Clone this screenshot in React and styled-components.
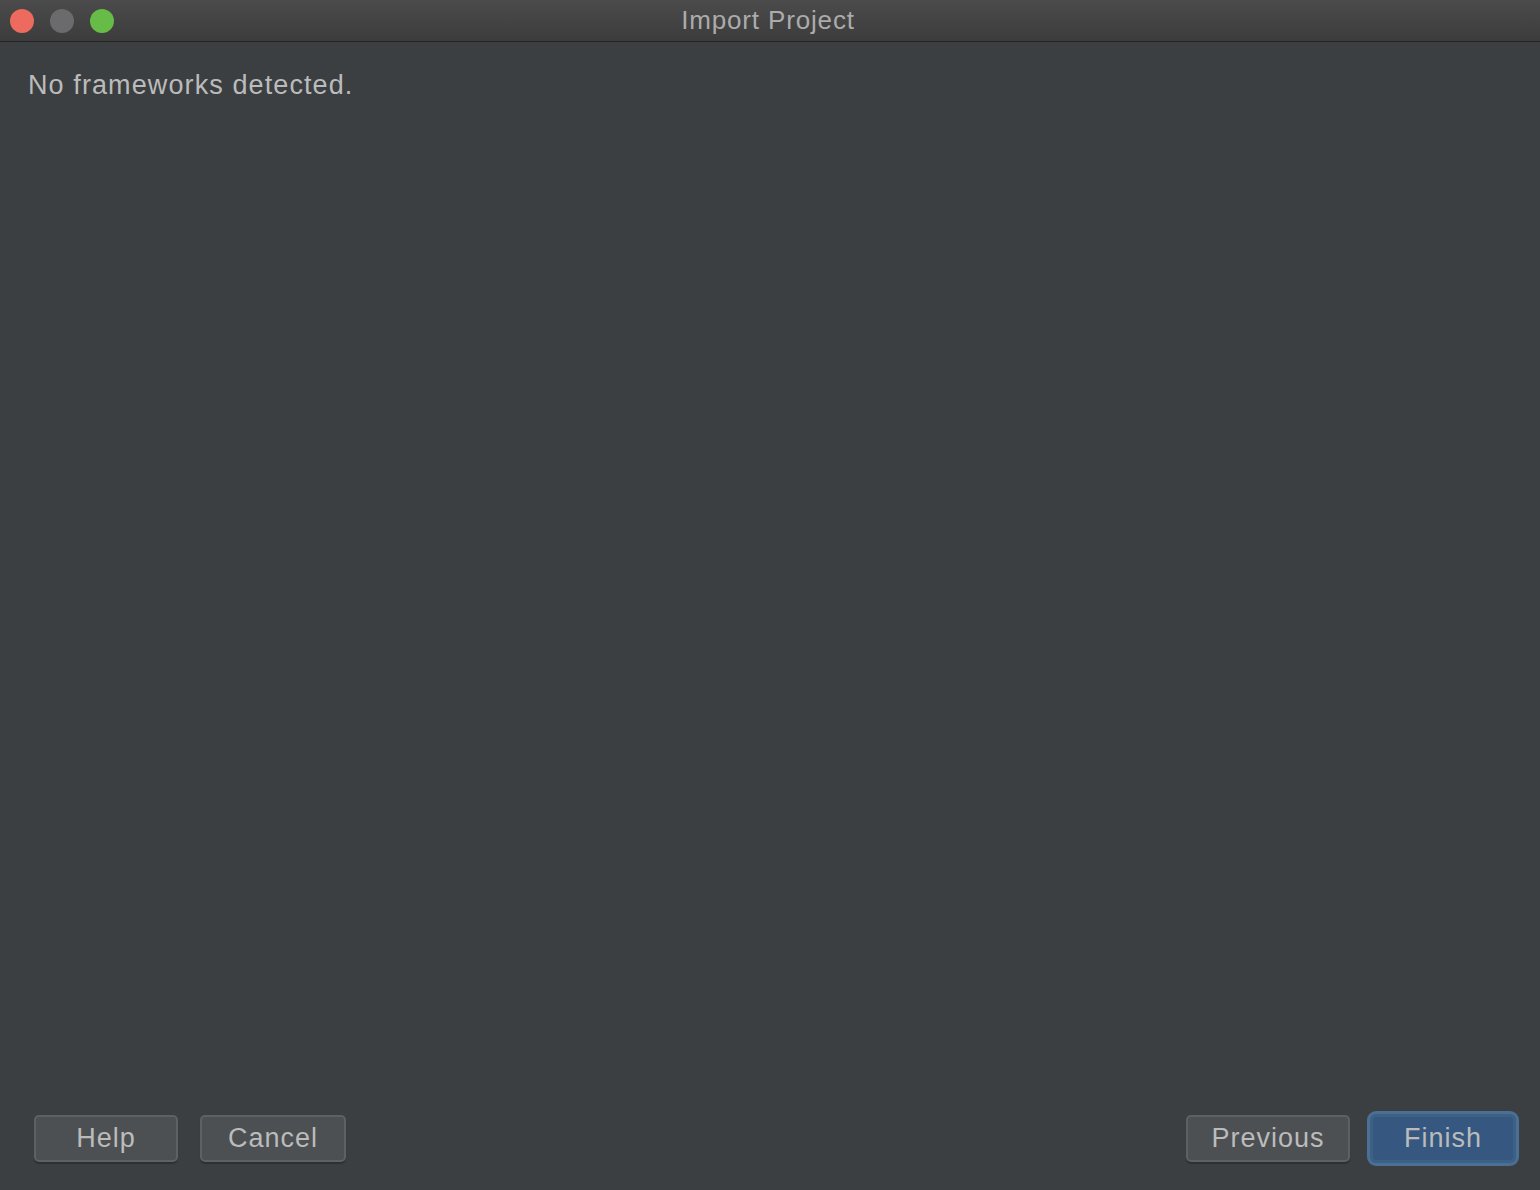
import React from "react";
import styled, { createGlobalStyle } from "styled-components";

const Global = createGlobalStyle`
  html, body { margin: 0; padding: 0; background: #3c3f41; }
  body { font-family: "Liberation Sans", Arial, sans-serif; }
`;

const Window = styled.div`
  width: 1540px;
  height: 1190px;
  display: flex;
  flex-direction: column;
  background: #3c3f41;
  overflow: hidden;
`;

const TitleBar = styled.div`
  height: 41px;
  flex: none;
  display: grid;
  grid-template-columns: 200px 1fr 200px;
  align-items: center;
  background: linear-gradient(#4b4b4b, #3c3c3c);
  border-bottom: 1px solid #232323;
`;

const Lights = styled.div`
  display: flex;
  gap: 16px;
  padding-left: 10px;
`;

const Light = styled.span`
  width: 24px;
  height: 24px;
  border-radius: 50%;
  background: ${(p) => p.$c};
`;

const Title = styled.div`
  text-align: center;
  color: #ababab;
  font-size: 26px;
  letter-spacing: 0.85px;
  padding-right: 4px;
`;

const Body = styled.div`
  flex: 1;
  display: flex;
  flex-direction: column;
  padding: 26px 28px 0 28px;
`;

const Message = styled.div`
  color: #bbbbbb;
  font-size: 27px;
  letter-spacing: 1.1px;
  line-height: 34px;
`;

const Footer = styled.div`
  display: flex;
  justify-content: space-between;
  align-items: center;
  padding: 0 22px 25px 34px;
`;

const Group = styled.div`
  display: flex;
  gap: ${(p) => p.$gap}px;
  align-items: center;
`;

const Button = styled.button`
  box-sizing: border-box;
  width: ${(p) => p.$w}px;
  height: 47px;
  border-radius: 5px;
  font-family: "Liberation Sans", Arial, sans-serif;
  font-size: 27px;
  letter-spacing: 1px;
  color: #bbbbbb;
  background: #4c5052;
  border: 2px solid #5e6162;
  box-shadow: 0 2px 1px rgba(0, 0, 0, 0.25);
  padding: 0;
  display: flex;
  align-items: center;
  justify-content: center;
`;

const PrimaryButton = styled(Button)`
  width: 150px;
  height: 53px;
  border-radius: 8px;
  background: #365880;
  border: 2px solid #4b6f95;
  box-shadow: 0 0 0 3px #3d6185 inset, 0 0 0 1px #4a6f98;
  color: #bbbbbb;
`;

const Spacer = styled.div`
  flex: 1;
`;

export default function App() {
  return (
    <>
      <Global />
      <Window>
        <TitleBar>
          <Lights>
            <Light $c="#ec6a5e" />
            <Light $c="#6b6b6d" />
            <Light $c="#67bc47" />
          </Lights>
          <Title>Import Project</Title>
          <div />
        </TitleBar>
        <Body>
          <Message>No frameworks detected.</Message>
          <Spacer />
        </Body>
        <Footer>
          <Group $gap={22}>
            <Button $w={144}>Help</Button>
            <Button $w={146}>Cancel</Button>
          </Group>
          <Group $gap={18}>
            <Button $w={164}>Previous</Button>
            <PrimaryButton>Finish</PrimaryButton>
          </Group>
        </Footer>
      </Window>
    </>
  );
}
